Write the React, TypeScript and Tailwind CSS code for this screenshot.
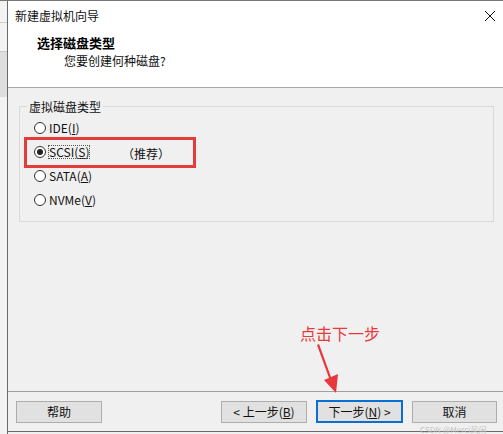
import React from 'react';

const font = { fontFamily: '"Noto Sans CJK SC", "Microsoft YaHei", sans-serif' };

function Radio({ label, hot, checked }: { label: string; hot: string; checked?: boolean }) {
  return (
    <div className="flex items-center h-[24px]">
      <span className="w-[12px] h-[12px] rounded-full border border-[#333] bg-white flex items-center justify-center">
        {checked && <span className="w-[6px] h-[6px] rounded-full bg-[#222]" />}
      </span>
      <span className={`ml-[3px] text-[12px] text-[#111] leading-none ${checked ? 'outline outline-1 outline-dotted outline-[#555]' : ''}`}>
        {label}(<span className="underline">{hot}</span>)
      </span>
    </div>
  );
}

export default function App() {
  return (
    <div className="relative w-[503px] h-[434px] overflow-hidden bg-[#f0f0f0] border-t border-[#777]" style={font}>
      <div className="flex h-full">
        {/* background strip on the left */}
        <div className="w-[7px] flex flex-col bg-[#f3f3f3]">
          <div className="h-[22px] border-b border-[#cfcfcf]" />
          <div className="h-[28px]" />
          <div className="h-[46px] bg-[#dedede] border-t border-[#c8c8c8]" />
        </div>

        {/* dialog window */}
        <div className="flex-1 flex flex-col border-l border-[#6a6a6a]">
          <div className="h-[87px] bg-white border-b border-[#a8a8a8] flex flex-col">
            <div className="h-[30px] flex items-center justify-between pl-[7px] pr-[6px]">
              <span className="text-[12px] text-[#111]">新建虚拟机向导</span>
              <svg width="12" height="12" viewBox="0 0 12 12" className="mr-[1px]">
                <path d="M1 1 L11 11 M11 1 L1 11" stroke="#111" strokeWidth="1" />
              </svg>
            </div>
            <div className="pl-[29px] pt-[5px] text-[13px] font-bold text-black leading-none">选择磁盘类型</div>
            <div className="pl-[56px] pt-[6px] text-[12px] text-[#111] leading-none">您要创建何种磁盘?</div>
          </div>

          <div className="flex-1 px-[11px] pr-[9px] pt-[18px]">
            <div className="relative border border-[#d9d9d9] h-[116px] pt-[9px] pl-[14px]">
              <span className="absolute -top-[9px] left-[7px] px-[2px] bg-[#f0f0f0] text-[12px] text-[#111]">虚拟磁盘类型</span>
              <Radio label="IDE" hot="I" />
              <Radio label="SCSI" hot="S" checked />
              <Radio label="SATA" hot="A" />
              <Radio label="NVMe" hot="V" />
              <span className="absolute left-[102px] top-[38px] text-[12px] text-[#111]">（推荐）</span>
              <div className="absolute left-[4px] top-[30px] w-[172px] h-[31px] border-[3px] border-[#e23c3c]" />
            </div>
          </div>

          <div className="h-[41px] border-t border-[#a0a0a0] border-b border-b-[#6a6a6a] flex items-center pl-[8px] pr-[6px] text-[12px] text-[#111]">
            <button className="w-[86px] h-[22px] bg-[#e1e1e1] border border-[#adadad]">帮助</button>
            <div className="flex-1" />
            <button className="w-[86px] h-[22px] bg-[#e1e1e1] border border-[#adadad]">&lt; 上一步(<span className="underline">B</span>)</button>
            <button className="ml-[9px] w-[87px] h-[23px] bg-[#e1e1e1] border-2 border-[#0a6fd1]">下一步(<span className="underline">N</span>) &gt;</button>
            <button className="ml-[9px] w-[85px] h-[22px] bg-[#e1e1e1] border border-[#adadad]">取消</button>
          </div>
          <div className="h-[2px]" />
        </div>
      </div>

      {/* annotation */}
      <span className="absolute left-[300px] top-[324px] text-[16px] text-[#e8383b] leading-none">点击下一步</span>
      <svg className="absolute left-[310px] top-[342px]" width="40" height="54" viewBox="0 0 40 54">
        <polygon points="7,2 9,1 21,34 28,31 26,50 14,37 19,35" fill="#e8383b" />
      </svg>
      <span className="absolute left-[420px] top-[425px] text-[8px] text-[#c4c4c4] leading-none">CSDN @Merci风闲</span>
    </div>
  );
}
